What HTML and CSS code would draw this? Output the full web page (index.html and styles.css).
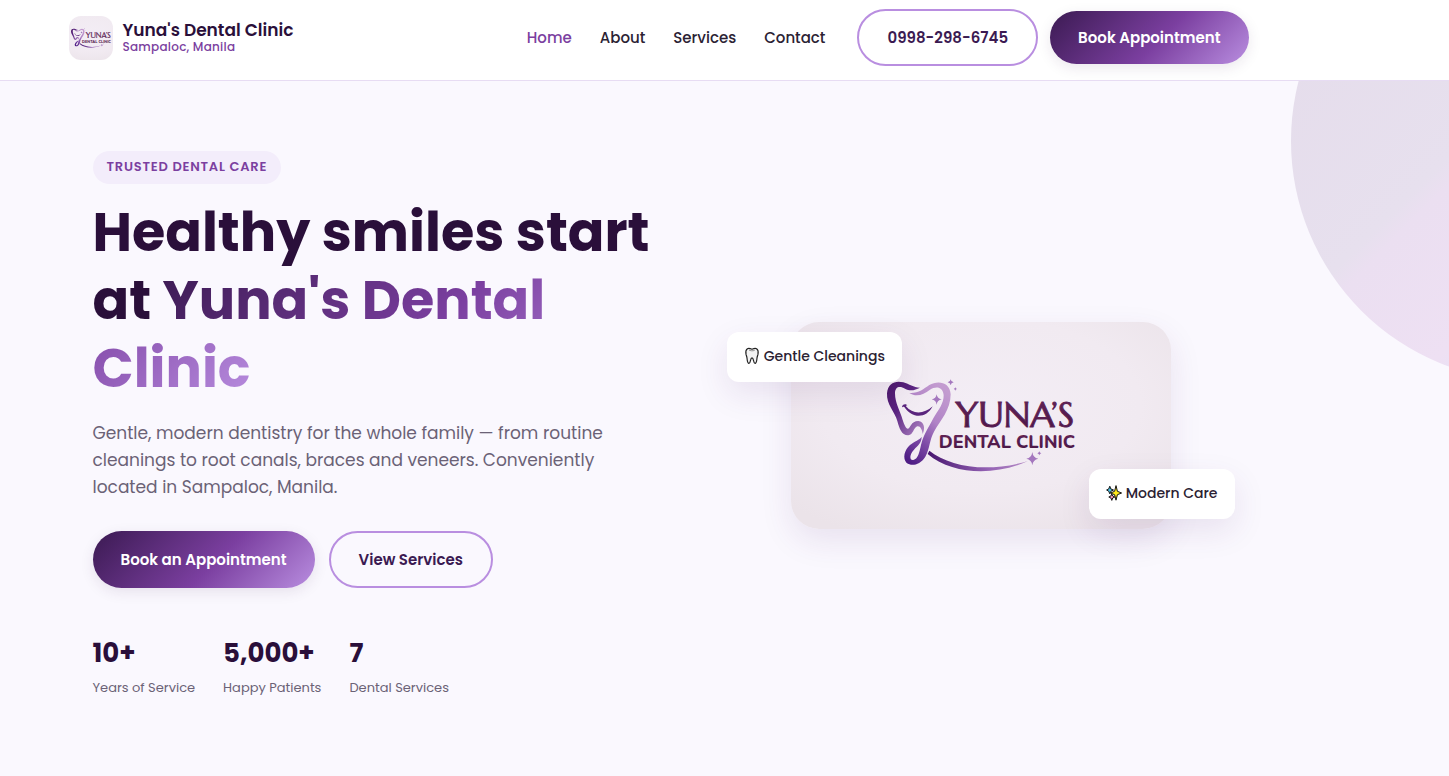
FILE: index.html
```html
<!DOCTYPE html>
<html lang="en">
<head>
<meta charset="utf-8">
<meta name="viewport" content="width=device-width, initial-scale=1">
<title>Yuna's Dental Clinic</title>
<link rel="stylesheet" href="styles.css">
</head>
<body>
<svg class="defs" aria-hidden="true">
  <defs>
    <radialGradient id="card" cx=".5" cy=".4" r=".7">
      <stop offset="0" stop-color="#f3edf5"/><stop offset=".6" stop-color="#f1eaf1"/><stop offset="1" stop-color="#ebe3e9"/>
    </radialGradient>
    <linearGradient id="left" x1="0" y1="0" x2="1" y2="1">
      <stop offset="0" stop-color="#4a1768"/><stop offset=".4" stop-color="#5a2380"/><stop offset="1" stop-color="#b48bc8"/>
    </linearGradient>
    <linearGradient id="right" x1=".7" y1="0" x2=".2" y2="1">
      <stop offset="0" stop-color="#c39bd0"/><stop offset=".4" stop-color="#b083c6"/><stop offset=".7" stop-color="#7d4aa6"/><stop offset="1" stop-color="#4f1d85"/>
    </linearGradient>
    <linearGradient id="swoosh">
      <stop offset="0" stop-color="#47166f"/><stop offset=".6" stop-color="#9462b4"/><stop offset="1" stop-color="#b58bc5"/>
    </linearGradient>
    <linearGradient id="word" x1="0" y1="0" x2="0" y2="1">
      <stop offset="0" stop-color="#6a2558"/><stop offset="1" stop-color="#421445"/>
    </linearGradient>
    <symbol id="logo" viewBox="0 0 380 207" preserveAspectRatio="xMidYMid slice">
      <rect width="380" height="207" fill="url(#card)"/>
      <g transform="translate(79 43) scale(.3333)">
        <path fill="url(#left)" d="M150 68C135 76 120 79 105 71C90 62 75 64 75 85C75 115 92 140 98 165C104 182 108 192 114 191C122 190 122 168 145 168C163 170 166 190 158 207C156 192 150 182 142 184C130 188 130 210 115 211C95 212 88 190 82 168C74 140 49 118 51 85C54 55 75 46 100 52C118 57 130 68 150 68Z"/>
        <path fill="url(#right)" d="M118 84C145 86 160 72 178 60C205 45 240 52 242 88C242 135 212 165 192 200C178 225 180 250 166 275C150 300 125 305 110 294C97 280 103 255 120 240C135 228 148 225 155 215C155 235 142 242 132 254C118 268 118 287 130 285C145 281 148 262 153 240C162 205 175 190 190 160C205 135 222 115 221 90C218 62 195 65 180 74C160 89 140 98 118 84Z"/>
        <path fill="#5a257d" d="M96 127C96 118 108 114 112 122C109 121 107 122 108 124C128 149 162 148 188 124C168 163 125 160 103 126C100 124 99 126 96 127Z"/>
        <path fill="url(#swoosh)" d="M178 257C240 305 350 325 474 288C380 332 250 332 173 267Z"/>
        <path fill="#a477be" d="M200 88Q202 101 215 103Q202 106 200 119Q198 106 185 103Q198 101 200 88ZM242 43Q243 51 251 52Q243 53 242 61Q241 53 233 52Q241 51 242 43ZM256 67Q257 71 261 72Q257 73 256 77Q255 73 251 72Q255 71 256 67ZM487 261Q489 278 505 281Q489 284 487 301Q485 284 469 281Q485 278 487 261ZM508 259Q509 264 514 265Q509 266 508 271Q507 266 502 265Q507 264 508 259Z"/>
        <text class="mark-name" x="435" y="185" text-anchor="middle">YUNA’S</text>
        <text class="mark-sub" x="411" y="248" text-anchor="middle">DENTAL CLINIC</text>
      </g>
    </symbol>
  </defs>
</svg>

<header class="site-header">
  <div class="shell">
    <div class="inner bar">
      <a class="brand" href="#home">
        <svg class="brand-logo" role="img" aria-label="Clinic logo"><use href="#logo"/></svg>
        <span class="brand-text">
          <span class="brand-name">Yuna's Dental Clinic</span>
          <span class="brand-place">Sampaloc, Manila</span>
        </span>
      </a>
      <div class="bar-right">
        <nav class="nav">
          <a class="active" href="#home">Home</a>
          <a href="#about">About</a>
          <a href="#services">Services</a>
          <a href="#contact">Contact</a>
        </nav>
        <div class="bar-actions">
          <a class="btn outline" href="tel:09982986745">0998-298-6745</a>
          <a class="btn primary" href="#book">Book Appointment</a>
        </div>
      </div>
    </div>
  </div>
</header>

<main class="hero" id="home">
  <div class="shell">
    <div class="inner hero-grid">
      <section>
        <span class="eyebrow">TRUSTED DENTAL CARE</span>
        <h1>Healthy smiles start at <span class="accent">Yuna's Dental Clinic</span></h1>
        <p class="lead">Gentle, modern dentistry for the whole family — from routine cleanings to root canals, braces and veneers. Conveniently located in Sampaloc, Manila.</p>
        <div class="actions">
          <a class="btn primary" href="#book">Book an Appointment</a>
          <a class="btn outline" href="#services">View Services</a>
        </div>
        <div class="stats">
          <div><strong>10+</strong><span>Years of Service</span></div>
          <div><strong>5,000+</strong><span>Happy Patients</span></div>
          <div><strong>7</strong><span>Dental Services</span></div>
        </div>
      </section>
      <div class="visual">
        <svg class="card" role="img" aria-label="Yuna's Dental Clinic"><use href="#logo"/></svg>
        <div class="chip chip-top">
          <svg class="chip-icon" viewBox="0 0 16 18" aria-hidden="true">
            <path d="M8 2.2C6.5 1.6 4.8 1 3.4 1.7C1.8 2.8 1.6 5 2 7.2C2.3 8.6 2.8 9.4 3 11C3.2 13.4 3.4 16.4 5 16.4C6.8 16.4 6.1 10.8 8 10.8C9.9 10.8 9.2 16.4 11 16.4C12.6 16.4 12.8 13.4 13 11C13.2 9.4 13.7 8.6 14 7.2C14.4 5 14.2 2.8 12.6 1.7C11.2 1 9.5 1.6 8 2.2Z" fill="#f3f3f3" stroke="#222" stroke-width="1.2"/>
            <path d="M5 3C6.3 3.8 8.7 4.2 10.7 3.3" fill="none" stroke="#777" stroke-width=".8"/>
          </svg>
          Gentle Cleanings
        </div>
        <div class="chip chip-bottom">
          <svg class="chip-icon" viewBox="0 0 16 18" aria-hidden="true" stroke="#161616" stroke-linejoin="round">
            <path d="M3.8 2.2L4.9 5L7.5 6L4.9 7.2L3.8 9.8L2.7 7.2L.6 6L2.7 5Z" fill="#4fc3e8"/>
            <path d="M5.8 10L6.7 12L8.8 13L6.7 14L5.8 16.4L4.9 14L2.8 13L4.9 12Z" fill="#f39ac0"/>
            <path d="M10 1.6L11.4 7.3L15.6 9L11.4 10.7L10 16.2L8.6 10.7L4.6 9L8.6 7.3Z" fill="#ffe81a"/>
          </svg>
          Modern Care
        </div>
      </div>
    </div>
  </div>
</main>
</body>
</html>
```
FILE: styles.css
```css
:root {
  --deep: #3b1a52;
  --ink: #2a0f3a;
  --violet: #7b3fa0;
  --lilac: #b98ee0;
  --grad: linear-gradient(135deg, #3b1a52 0%, #7b3fa0 55%, #b98ee0 100%);
}
* { box-sizing: border-box; }
body {
  margin: 0;
  min-height: 100vh;
  display: flex;
  flex-direction: column;
  background: #faf8fe;
  color: #2b2233;
  font-family: Poppins, Inter, "Open Sans", sans-serif;
  font-size: 16px;
  line-height: 27px;
}
a { color: inherit; text-decoration: none; }
.defs { position: absolute; width: 0; height: 0; }
.shell { width: 100%; max-width: 1312px; margin: 0 auto; }
.inner { max-width: 1180px; }

.site-header {
  background: #fff;
  border-bottom: 1px solid #e7dcf3;
  padding: 9px 0 14px;
}
.bar, .bar-right, .bar-actions, .brand, .nav { display: flex; align-items: center; }
.bar { justify-content: space-between; }
.bar-right { gap: 32px; }
.bar-actions { gap: 12px; }
.brand { gap: 10px; }
.brand-logo { width: 44px; height: 44px; border-radius: 12px; }
.brand-text { display: flex; flex-direction: column; }
.brand-name { font-size: 17px; font-weight: 600; line-height: 18px; color: var(--ink); }
.brand-place { font-size: 12px; font-weight: 500; line-height: 16px; letter-spacing: .02em; color: var(--violet); }
.nav { gap: 28px; font-size: 15px; font-weight: 500; }
.nav .active { color: var(--violet); }

.btn {
  display: inline-flex;
  align-items: center;
  padding: 13px 28px;
  border-radius: 999px;
  font-size: 15px;
  font-weight: 600;
  white-space: nowrap;
}
.primary { background: var(--grad); color: #fff; box-shadow: 0 4px 14px rgba(59, 26, 82, .1); }
.outline { border: 2px solid var(--lilac); color: var(--deep); }

.hero { position: relative; flex: 1; overflow: hidden; padding: 70px 0; }
.hero::before {
  content: "";
  position: absolute;
  top: -180px;
  right: -322px;
  width: 480px;
  height: 480px;
  border-radius: 50%;
  background: linear-gradient(135deg, #e4dbea 0%, #e7e0ee 43%, #ebdff1 46%, #eee0f3 63%, #e9e1f5 67%);
}
.hero-grid {
  position: relative;
  display: grid;
  grid-template-columns: 1.1fr .9fr;
  gap: 48px;
  align-items: center;
  padding: 0 24px;
}
.eyebrow {
  display: inline-block;
  padding: 5px 14px 7px;
  border-radius: 999px;
  background: #f3edfb;
  color: var(--violet);
  font-size: 13px;
  font-weight: 600;
  line-height: 21px;
  letter-spacing: .06em;
}
h1 { margin: 14px 0 18px; font-size: 54px; font-weight: 700; line-height: 68px; color: var(--ink); }
.accent { background: var(--grad); -webkit-background-clip: text; background-clip: text; color: transparent; }
.lead { max-width: 520px; margin: 0 0 30px; font-size: 17px; color: #6b6276; }
.actions { display: flex; gap: 14px; }
.stats { display: flex; gap: 28px; margin-top: 43px; }
.stats strong { display: block; font-size: 26px; line-height: 45px; color: var(--ink); }
.stats span { display: block; font-size: 13px; line-height: 24px; color: #6b6276; }

.visual { position: relative; display: flex; justify-content: center; }
.card {
  width: 100%;
  max-width: 380px;
  aspect-ratio: 380 / 207;
  border-radius: 28px;
  box-shadow: 0 12px 32px rgba(74, 26, 110, .1);
}
.chip {
  position: absolute;
  display: flex;
  align-items: center;
  gap: 4px;
  padding: 11px 17px 13px;
  border-radius: 12px;
  background: #fff;
  box-shadow: 0 12px 32px rgba(74, 26, 110, .1);
  font-size: 14px;
  font-weight: 500;
  line-height: 26px;
}
.chip-icon { width: 16px; height: 18px; }
.chip-top { top: 10px; left: -10px; }
.chip-bottom { right: -10px; bottom: 10px; }
.mark-name { font-family: Marcellus, "Liberation Serif", serif; font-size: 108px; fill: url(#word); stroke: #5c1f54; stroke-width: 3px; }
.mark-sub { font-family: Nunito, Lato, sans-serif; font-weight: 800; font-size: 54px; fill: url(#word); }
```
